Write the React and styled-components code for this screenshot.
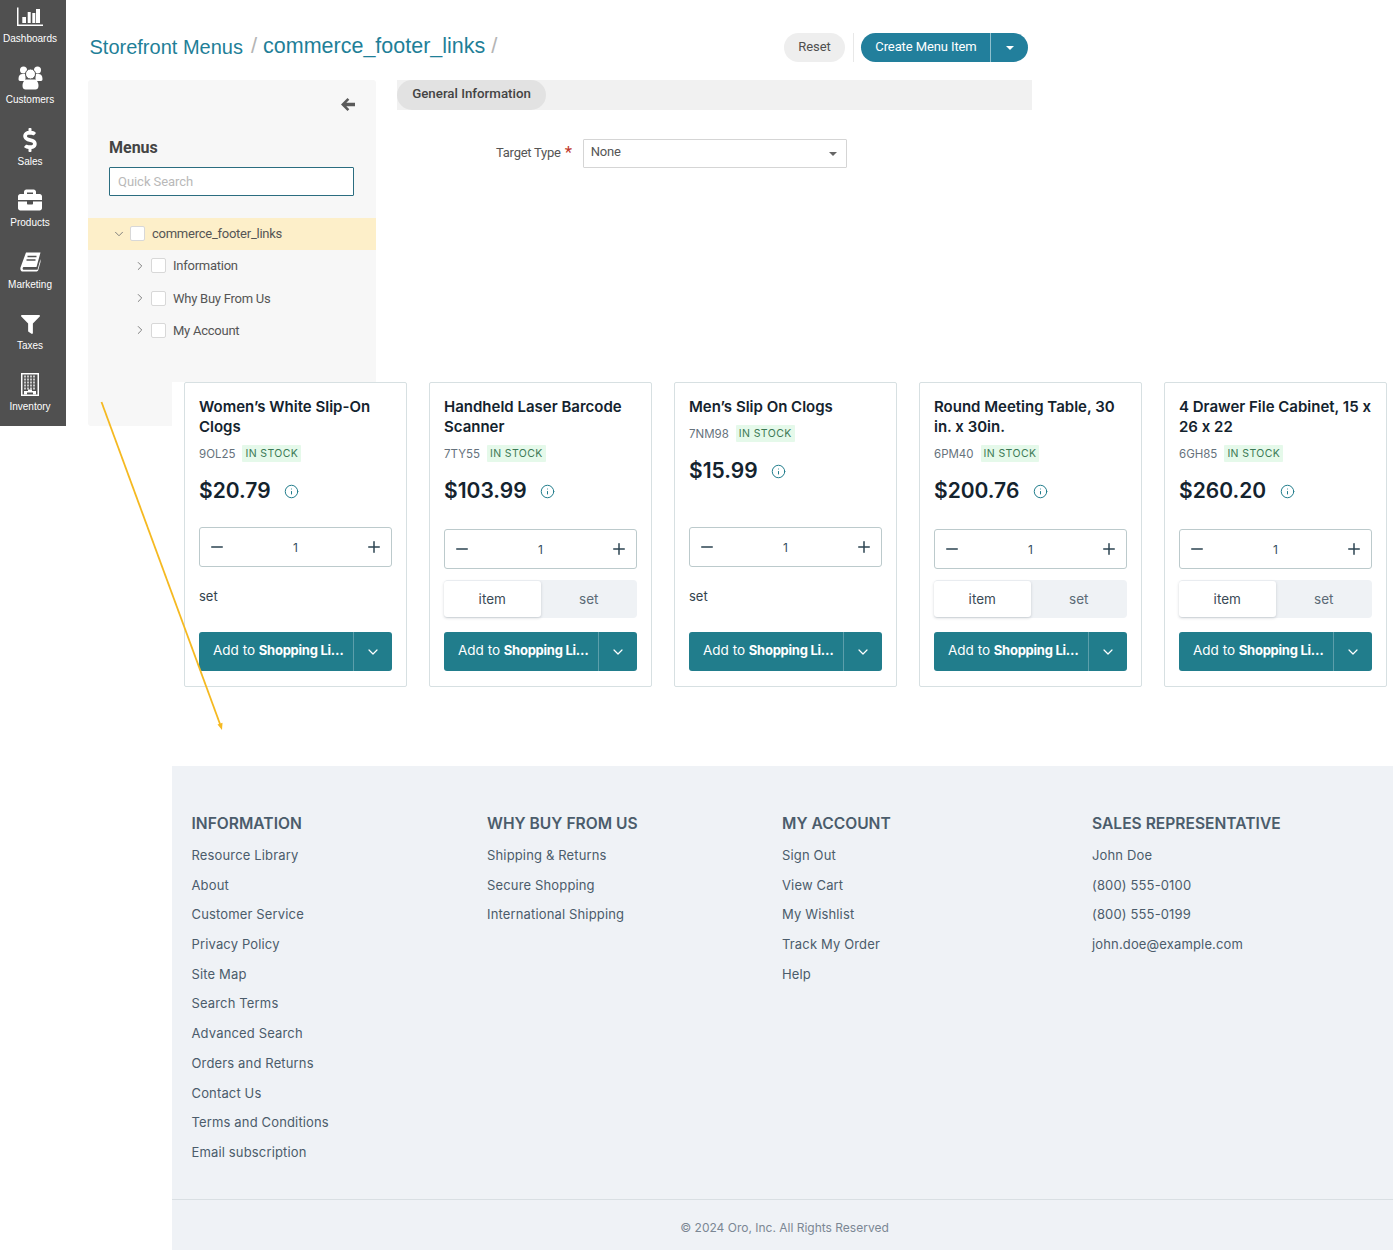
import React from 'react';
import styled, { createGlobalStyle } from 'styled-components';
import { FaDollarSign, FaBriefcase, FaFilter } from 'react-icons/fa';
import { ChevronDown, ChevronRight, Info, Minus, Plus } from 'lucide-react';

const GlobalStyle = createGlobalStyle`
  html, body {
    margin: 0;
    padding: 0;
    background: #fff;
  }
  * {
    box-sizing: border-box;
  }
`;

const Page = styled.div`
  position: relative;
  width: 1393px;
  height: 1250px;
  overflow: hidden;
  font-family: Roboto, 'Liberation Sans', sans-serif;
`;

const Shell = styled.div`
  display: flex;
  height: 426px;
`;

const Sidebar = styled.nav`
  width: 66px;
  flex: none;
  background: #505050;
  padding: 4px 6px 0 0;
`;

const NavItem = styled.div`
  height: 61.4px;
  display: flex;
  flex-direction: column;
  align-items: center;
  color: #fff;
  font: 10px/14px 'Liberation Sans', Arial, sans-serif;
  white-space: nowrap;
`;

const NavIcon = styled.div`
  height: 24px;
  margin-bottom: 4px;
  display: flex;
  align-items: center;
  justify-content: center;
  transform: translateY(${p => p.$nudge || 0}px);
`;

const Main = styled.main`
  flex: 1;
  padding: 33px 0 0 22px;
`;

const TitleBar = styled.div`
  width: 940px;
  height: 29px;
  margin-bottom: 18px;
  display: flex;
  align-items: center;
  justify-content: space-between;
`;

const Breadcrumb = styled.div`
  display: flex;
  align-items: baseline;
  padding-left: 1.5px;
  color: #1f7f98;
  font-family: 'Liberation Sans', Arial, sans-serif;
`;

const Crumb = styled.span`
  font-size: ${p => (p.$big ? 21.5 : 20)}px;
  position: relative;
  top: ${p => (p.$big ? -2 : -1)}px;
`;

const Slash = styled.span`
  color: #b5b5b5;
  font-size: 22px;
  margin: 0 ${p => (p.$end ? 0 : 6)}px 0 ${p => (p.$end ? 6 : 8)}px;
  position: relative;
  top: -2px;
`;

const Actions = styled.div`
  display: flex;
  align-items: center;
  font-size: 13px;
  letter-spacing: -0.1px;
`;

const ResetButton = styled.div`
  width: 61px;
  height: 29px;
  border-radius: 15px;
  background: #eeeeee;
  color: #4f4f4f;
  display: flex;
  align-items: center;
  justify-content: center;
  padding-bottom: 2px;
`;

const ActionDivider = styled.div`
  width: 1px;
  height: 29px;
  margin: 0 7px 0 8px;
  background: #e8e8e8;
`;

const CreateButton = styled.div`
  width: 167px;
  height: 29px;
  border-radius: 15px;
  background: #227f9c;
  color: #fff;
  display: flex;
  align-items: stretch;
`;

const CreateLabel = styled.div`
  width: 130px;
  display: flex;
  align-items: center;
  justify-content: center;
  padding: 0 0 2px 1px;
  border-right: 1px solid #8fc0ce;
`;

const CreateCaret = styled.div`
  flex: 1;
  display: flex;
  align-items: center;
  justify-content: center;
`;

const Caret = styled.i`
  display: block;
  width: 0;
  height: 0;
  border-left: 4.5px solid transparent;
  border-right: 4.5px solid transparent;
  border-top: 4.5px solid ${p => p.$color || '#fff'};
`;

const Columns = styled.div`
  display: flex;
  align-items: flex-start;
  gap: 21px;
`;

const TreePanel = styled.aside`
  width: 288px;
  height: 346px;
  flex: none;
  background: #f7f7f7;
  border-radius: 3px;
  padding-top: 18px;
  color: #555;
`;

const CollapseRow = styled.div`
  height: 14px;
  padding-right: 21px;
  display: flex;
  justify-content: flex-end;
  color: #5a5a5a;
`;

const PanelTitle = styled.h2`
  margin: 26px 0 0 21px;
  font-size: 16px;
  line-height: 20px;
  font-weight: 700;
  color: #444;
`;

const QuickSearch = styled.div`
  margin: 9px 0 22px 21px;
  width: 245px;
  height: 29px;
  background: #fff;
  border: 1px solid #2b6d80;
  border-radius: 1px;
  padding-left: 8px;
  display: flex;
  align-items: center;
  font-size: 13px;
  letter-spacing: -0.05px;
  color: #b9b9b9;
`;

const TreeRow = styled.div`
  height: ${p => (p.$root ? 32 : 32.4)}px;
  padding-bottom: 1px;
  display: flex;
  align-items: center;
  padding-left: ${p => (p.$root ? 24 : 45)}px;
  background: ${p => (p.$root ? '#fdefc9' : 'transparent')};
  font-size: 13px;
  letter-spacing: -0.25px;
  color: #555;
  svg {
    flex: none;
    color: #777;
  }
`;

const Check = styled.span`
  width: 15px;
  height: 15px;
  flex: none;
  margin: 0 7px 0 4px;
  background: #fff;
  border: 1px solid #d8d8d8;
  border-radius: 2px;
`;

const Content = styled.section`
  width: 635px;
`;

const TabBar = styled.div`
  height: 30px;
  background: #f1f1f1;
`;

const ActiveTab = styled.div`
  width: 149px;
  height: 30px;
  border-radius: 15px;
  background: #e2e2e2;
  color: #444;
  font-size: 13.3px;
  font-weight: 500;
  display: flex;
  align-items: center;
  justify-content: center;
  padding-bottom: 3px;
`;

const FormRow = styled.div`
  margin-top: 29px;
  padding-left: 99px;
  display: flex;
  align-items: center;
  font-size: 13px;
  letter-spacing: -0.25px;
  color: #555;
`;

const FieldLabel = styled.span`
  margin-bottom: 2px;
`;

const Required = styled.span`
  color: #c0392b;
  font-size: 17px;
  margin: 0 11px 0 4px;
  position: relative;
  top: -2px;
`;

const SelectBox = styled.div`
  width: 264px;
  height: 29px;
  border: 1px solid #d5d5d5;
  border-radius: 1px;
  padding: 0 9px 4px 7px;
  display: flex;
  align-items: center;
  justify-content: space-between;
  i {
    margin-top: 4px;
  }
`;

const Storefront = styled.div`
  position: relative;
  margin: -44px 0 0 172px;
  background: #fff;
  font-family: Inter, 'Noto Sans', sans-serif;
  font-feature-settings: 'calt' 0;
`;

const Cards = styled.div`
  height: 384px;
  padding-left: 12px;
  display: flex;
  align-items: flex-start;
  gap: 22px;
`;

const Card = styled.article`
  width: 223px;
  height: 305px;
  border: 1px solid #d7e0e2;
  border-radius: 2px;
  padding: 15px 14px;
  display: flex;
  flex-direction: column;
`;

const ProductName = styled.h3`
  margin: -1px -5.5px 0 0;
  font-size: 15px;
  line-height: 20px;
  font-weight: 600;
  color: #14232e;
`;

const SkuRow = styled.div`
  margin-top: 8px;
  display: flex;
  align-items: center;
  gap: 7px;
  color: #66727c;
  font-size: 11.5px;
`;

const Stock = styled.span`
  height: 17px;
  padding: 0 3px;
  display: flex;
  align-items: center;
  background: #e5f9ea;
  color: #3c7a55;
  font-size: 10.5px;
  letter-spacing: 0.4px;
  border-radius: 1px;
`;

const PriceRow = styled.div`
  margin-top: 14px;
  display: flex;
  align-items: center;
  gap: 13.5px;
  font-size: 21px;
  line-height: 30px;
  font-weight: 600;
  color: #14232e;
  svg {
    color: #217d8c;
    margin-top: 1px;
  }
`;

const Stepper = styled.div`
  margin-top: auto;
  height: 40px;
  border: 1px solid #bccacc;
  border-radius: 3px;
  padding: 0 8px;
  display: flex;
  align-items: center;
  justify-content: space-between;
  font-size: 12px;
  color: #33505f;
  svg {
    color: #2c4452;
  }
`;

const UnitText = styled.div`
  margin: 19px 0 25px;
  height: 21px;
  line-height: 21px;
  font-size: 13px;
  color: #33424e;
`;

const UnitToggle = styled.div`
  margin: 11px 0 14px;
  height: 38px;
  padding: 1px 0;
  display: grid;
  grid-template-columns: 1fr 1fr;
  background: #eff2f5;
  border-radius: 4px;
  font-size: 13.5px;
  color: #5c6a76;
`;

const UnitOption = styled.div`
  display: flex;
  align-items: center;
  justify-content: center;
  border-radius: 3px;
  background: ${p => (p.$active ? '#fff' : 'transparent')};
  box-shadow: ${p => (p.$active ? '0 1px 3px rgba(40, 60, 70, 0.22)' : 'none')};
  color: ${p => (p.$active ? '#3a4a56' : '#5c6a76')};
`;

const AddButton = styled.div`
  height: 39px;
  flex: none;
  border-radius: 3px;
  background: #217d8c;
  color: #fff;
  display: flex;
  align-items: stretch;
  font-size: 13.5px;
`;

const AddLabel = styled.div`
  width: 155px;
  flex: none;
  padding: 0 0 2px 14px;
  line-height: 37px;
  white-space: nowrap;
  border-right: 1px solid #5c9fab;
  b {
    font-size: 13px;
    font-weight: 700;
    letter-spacing: -0.25px;
  }
`;

const AddCaret = styled.div`
  flex: 1;
  display: flex;
  align-items: center;
  justify-content: center;
`;

const Footer = styled.footer`
  height: 484px;
  background: #eff2f6;
  color: #4b5c6b;
  display: flex;
  flex-direction: column;
`;

const FooterColumns = styled.div`
  flex: 1;
  padding: 48px 0 0 19.5px;
  display: grid;
  grid-template-columns: 295.5px 295px 310px 1fr;
`;

const FooterHeading = styled.h4`
  margin: 0 0 7px;
  height: 20px;
  font-size: 15.6px;
  line-height: 20px;
  font-weight: 600;
  text-transform: uppercase;
`;

const FooterLink = styled.div`
  height: 29.7px;
  line-height: 29.7px;
  font-size: 13px;
  letter-spacing: 0.15px;
`;

const Copyright = styled.div`
  height: 51px;
  border-top: 1px solid #d9dfe3;
  padding: 4px 0 0 4px;
  display: flex;
  align-items: center;
  justify-content: center;
  font-size: 12px;
  color: #7b8794;
`;

const Annotation = styled.svg`
  position: absolute;
  left: 0;
  top: 0;
  pointer-events: none;
`;

function ChartIcon() {
  return (
    <svg width="26" height="21" viewBox="0 0 26 21" fill="#fff">
      <path d="M0 1.500h1.500v17H26V20H0z" />
      <rect x="5.300" y="11" width="3.700" height="6" />
      <rect x="10.700" y="6" width="3" height="11" />
      <rect x="15.300" y="7" width="3" height="10" />
      <rect x="19" y="3" width="4" height="14" />
    </svg>
  );
}

function PeopleIcon() {
  return (
    <svg width="25" height="24" viewBox="0 0 25 24" fill="#fff">
      <circle cx="5.500" cy="4" r="3.500" />
      <circle cx="19.500" cy="4" r="3.500" />
      <path d="M.5 13c0-3.500 1.500-5 4-5h3v7H2c-1 0-1.500-.8-1.500-2zM24.500 13c0-3.500-1.500-5-4-5h-3v7H23c1 0 1.500-.8 1.500-2z" />
      <circle cx="12.500" cy="8" r="5" stroke="#505050" strokeWidth="1" />
      <path d="M4.500 20c0-4 2-6.500 4.500-6.500h7c2.500 0 4.500 2.500 4.500 6.500 0 2.500-1.500 3.500-3 3.500H7.500c-1.500 0-3-1-3-3.500z" />
    </svg>
  );
}

function BackArrow() {
  return (
    <svg width="14" height="13" viewBox="0 0 14 13" fill="currentColor">
      <path d="M6.500 0l1.800 1.800-3 3H14v3.400H5.300l3 3L6.500 13 0 6.500z" />
    </svg>
  );
}

function BookIcon() {
  return (
    <svg width="21" height="20" viewBox="0 0 21 20">
      <path d="M6 .5h14.500L16.500 15H4c-1.800 0-1.800 2.800 0 2.800h13.500L20.500 7v3l-2.300 8.300c-.2.7-.7 1.200-1.500 1.200H3C.8 19.500 0 17.500.5 15.500z" fill="#fff" />
      <path d="M7.500 4.500h9M6.500 8h9" stroke="#505050" strokeWidth="1.500" />
    </svg>
  );
}

function BuildingIcon() {
  const windows = [];
  for (let row = 0; row < 5; row++) {
    for (let col = 0; col < 4; col++) {
      windows.push(<rect key={`${row}-${col}`} x={3 + col * 3} y={2.500 + row * 3} width="2" height="2" fill="#c9c9c9" />);
    }
  }
  return (
    <svg width="18" height="23" viewBox="0 0 18 23">
      <rect width="18" height="23" fill="#fff" />
      <rect x="1.500" y="1.500" width="15" height="20" fill="#505050" />
      {windows}
      <path d="M3 21.500v-3.500h4v-1.500h4V18h4v3.500h-3v-2H6v2z" fill="#fff" />
    </svg>
  );
}

const navItems = [
  { label: 'Dashboards', icon: <ChartIcon /> },
  { label: 'Customers', icon: <PeopleIcon />, nudge: 1 },
  { label: 'Sales', icon: <FaDollarSign size={24} />, nudge: 1 },
  { label: 'Products', icon: <FaBriefcase size={24} /> },
  { label: 'Marketing', icon: <BookIcon /> },
  { label: 'Taxes', icon: <FaFilter size={19} />, nudge: 2 },
  { label: 'Inventory', icon: <BuildingIcon /> },
];

const products = [
  { name: 'Women’s White Slip-On Clogs', sku: '9OL25', price: '$20.79', units: false },
  { name: 'Handheld Laser Barcode Scanner', sku: '7TY55', price: '$103.99', units: true },
  { name: 'Men’s Slip On Clogs', sku: '7NM98', price: '$15.99', units: false },
  { name: 'Round Meeting Table, 30 in. x 30in.', sku: '6PM40', price: '$200.76', units: true },
  { name: '4 Drawer File Cabinet, 15 x 26 x 22', sku: '6GH85', price: '$260.20', units: true },
];

const footerColumns = [
  {
    title: 'Information',
    links: [
      'Resource Library',
      'About',
      'Customer Service',
      'Privacy Policy',
      'Site Map',
      'Search Terms',
      'Advanced Search',
      'Orders and Returns',
      'Contact Us',
      'Terms and Conditions',
      'Email subscription',
    ],
  },
  { title: 'Why Buy From Us', links: ['Shipping & Returns', 'Secure Shopping', 'International Shipping'] },
  { title: 'My Account', links: ['Sign Out', 'View Cart', 'My Wishlist', 'Track My Order', 'Help'] },
  { title: 'Sales Representative', links: ['John Doe', '(800) 555-0100', '(800) 555-0199', 'john.doe@example.com'] },
];

function ProductCard({ name, sku, price, units }) {
  return (
    <Card>
      <ProductName>{name}</ProductName>
      <SkuRow>
        {sku}
        <Stock>IN STOCK</Stock>
      </SkuRow>
      <PriceRow>
        {price}
        <Info size={15} strokeWidth={1.6} />
      </PriceRow>
      <Stepper>
        <Minus size={18} strokeWidth={2} />
        1
        <Plus size={18} strokeWidth={2} />
      </Stepper>
      {units ? (
        <UnitToggle>
          <UnitOption $active>item</UnitOption>
          <UnitOption>set</UnitOption>
        </UnitToggle>
      ) : (
        <UnitText>set</UnitText>
      )}
      <AddButton>
        <AddLabel>
          Add to <b>Shopping Li…</b>
        </AddLabel>
        <AddCaret>
          <ChevronDown size={16} strokeWidth={1.8} />
        </AddCaret>
      </AddButton>
    </Card>
  );
}

export default function App() {
  return (
    <Page>
      <GlobalStyle />
      <Shell>
        <Sidebar>
          {navItems.map(item => (
            <NavItem key={item.label}>
              <NavIcon $nudge={item.nudge}>{item.icon}</NavIcon>
              {item.label}
            </NavItem>
          ))}
        </Sidebar>
        <Main>
          <TitleBar>
            <Breadcrumb>
              <Crumb>Storefront Menus</Crumb>
              <Slash>/</Slash>
              <Crumb $big>commerce_footer_links</Crumb>
              <Slash $end>/</Slash>
            </Breadcrumb>
            <Actions>
              <ResetButton>Reset</ResetButton>
              <ActionDivider />
              <CreateButton>
                <CreateLabel>Create Menu Item</CreateLabel>
                <CreateCaret>
                  <Caret />
                </CreateCaret>
              </CreateButton>
            </Actions>
          </TitleBar>
          <Columns>
            <TreePanel>
              <CollapseRow>
                <BackArrow />
              </CollapseRow>
              <PanelTitle>Menus</PanelTitle>
              <QuickSearch>Quick Search</QuickSearch>
              <TreeRow $root>
                <ChevronDown size={14} strokeWidth={1.6} />
                <Check />
                commerce_footer_links
              </TreeRow>
              {['Information', 'Why Buy From Us', 'My Account'].map(label => (
                <TreeRow key={label}>
                  <ChevronRight size={14} strokeWidth={1.6} />
                  <Check />
                  {label}
                </TreeRow>
              ))}
            </TreePanel>
            <Content>
              <TabBar>
                <ActiveTab>General Information</ActiveTab>
              </TabBar>
              <FormRow>
                <FieldLabel>Target Type</FieldLabel>
                <Required>*</Required>
                <SelectBox>
                  None
                  <Caret $color="#666" />
                </SelectBox>
              </FormRow>
            </Content>
          </Columns>
        </Main>
      </Shell>
      <Storefront>
        <Cards>
          {products.map(product => (
            <ProductCard key={product.sku} {...product} />
          ))}
        </Cards>
        <Footer>
          <FooterColumns>
            {footerColumns.map(column => (
              <div key={column.title}>
                <FooterHeading>{column.title}</FooterHeading>
                {column.links.map(link => (
                  <FooterLink key={link}>{link}</FooterLink>
                ))}
              </div>
            ))}
          </FooterColumns>
          <Copyright>© 2024 Oro, Inc. All Rights Reserved</Copyright>
        </Footer>
      </Storefront>
      <Annotation width="240" height="740" viewBox="0 0 240 740">
        <path d="M101.500 402L220 724" stroke="#f5b921" strokeWidth="1.800" fill="none" />
        <path d="M222 730l-4.500-5.500 5-1.800z" fill="#f5b921" />
      </Annotation>
    </Page>
  );
}
